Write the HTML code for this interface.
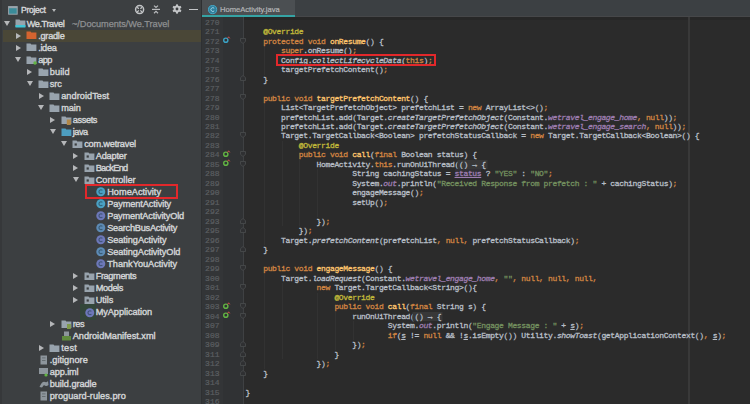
<!DOCTYPE html>
<html><head><meta charset="utf-8"><style>
*{margin:0;padding:0;box-sizing:border-box}
html,body{width:750px;height:404px;overflow:hidden;background:#2b2b2b}
#left{position:absolute;left:0;top:0;width:201px;height:404px;background:#3c3f41;overflow:hidden}
#lstrip{position:absolute;left:0;top:0;width:2.2px;height:404px;background:#36383a}
.hl{position:absolute;left:3px;top:30px;width:199px;height:12px;background:#4a4737}
.tl{position:absolute;font:9.2px/12px "Liberation Sans",sans-serif;color:#d2d4d6;white-space:pre;-webkit-text-stroke:0.4px #d2d4d6}
.path{color:#8e9092;-webkit-text-stroke:0.25px #8e9092}
.tri-d{position:absolute;width:0;height:0;border-left:3px solid transparent;border-right:3px solid transparent;border-top:5px solid #b5b7b9}
.tri-r{position:absolute;width:0;height:0;border-top:3px solid transparent;border-bottom:3px solid transparent;border-left:5px solid #b5b7b9}
.fold{position:absolute;width:8.5px;height:7px;background:#8f9aa3;border-radius:0.5px}
.fold.orange{background:#d66a35}
.fold.blue{background:#5a8db5}
.cls{position:absolute;width:9px;height:9px;border-radius:50%;background:#4aa1c4}
.cls.c2{background:#6c77b8}
.cls.c3{background:#5e8bb6}
.fil{position:absolute;width:7px;height:9px;background:#8f969c}
#phead{position:absolute;left:0;top:0;width:202px;height:18px}
#editor{position:absolute;left:202px;top:0;width:548px;height:404px;background:#2b2b2b;overflow:hidden}
#tabbar{position:absolute;left:202px;top:0;width:548px;height:17.2px;background:#3c4043;border-bottom:1.3px solid #464749}
#tab{position:absolute;left:202px;top:0;width:93px;height:15px;background:#4b4f52}
#tabline{position:absolute;left:202px;top:15px;width:93px;height:2px;background:#35a3a4}
#gutter{position:absolute;left:202px;top:17px;width:42px;height:387px;background:#303234}
.ic{position:absolute;overflow:visible}
.ln{position:absolute;left:203.5px;width:16px;text-align:right;font:8.000px/9.49px "Liberation Mono",monospace;color:#5c5f62;white-space:pre;-webkit-text-stroke:0.2px}
.cl{position:absolute;left:245.4px;font:8.000px/9.49px "Liberation Mono",monospace;letter-spacing:-0.3512px;color:#b7bec6;white-space:pre;-webkit-text-stroke:0.3px}
.k{color:#d08442} .a{color:#c0b93a} .m{color:#ffc66d} .s{color:#73905f} .f{color:#9d7db0;font-style:italic} .i{font-style:italic}
.u{text-decoration:underline} .p{color:#9d7db0;text-decoration:underline;background:#333137}
.fb{background:#383838;box-shadow:-1.5px 0 0 #383838, 1.5px 0 0 #383838}
.rbox{position:absolute;border:2px solid #e2282b}
#margin{position:absolute;left:688.2px;top:17px;width:1.6px;height:387px;background:#393939}
</style></head><body>
<div id="left">
<div id="lstrip"></div>
<div class="hl"></div><div style="position:absolute;left:80px;top:304px;width:16px;height:15.5px;background:#33463a"></div>
<div class="tri-d" style="left:3.7px;top:21.1px"></div><svg class="ic" style="left:14.6px;top:19.4px" width="11" height="9" viewBox="0 0 11 9"><path d="M0.5 0.5 H4.5 L5.3 1.6 H10.4 V8 H0.5Z" fill="#98a3ad"/><rect x="0.5" y="6" width="9.9" height="2.5" fill="#3fc5d8"/></svg><div class="tl" style="left:26.7px;top:17.6px;letter-spacing:-0.414px"><span>We.Travel</span><span class="path" style="position:absolute;left:45.3px;top:0;letter-spacing:-0.05px">~/Documents/We.Travel</span></div><div class="tri-r" style="left:15.7px;top:32.6px"></div><svg class="ic" style="left:26.1px;top:31.4px" width="11" height="9" viewBox="0 0 11 9"><path d="M0.5 0.5 H4.5 L5.3 1.6 H10.4 V8 H0.5Z" fill="#d4642f"/></svg><div class="tl" style="left:38.2px;top:29.6px;letter-spacing:-0.255px"><span>.gradle</span></div><div class="tri-r" style="left:15.7px;top:44.6px"></div><svg class="ic" style="left:26.1px;top:43.4px" width="11" height="9" viewBox="0 0 11 9"><path d="M0.5 0.5 H4.5 L5.3 1.6 H10.4 V8 H0.5Z" fill="#98a3ad"/></svg><div class="tl" style="left:38.2px;top:41.6px;letter-spacing:-0.337px"><span>.idea</span></div><div class="tri-d" style="left:15.2px;top:57.2px"></div><svg class="ic" style="left:26.1px;top:55.5px" width="11" height="9" viewBox="0 0 11 9"><path d="M0.5 0.5 H4.5 L5.3 1.6 H10.4 V8 H0.5Z" fill="#98a3ad"/><circle cx="9" cy="7" r="1.7" fill="#62b543"/></svg><div class="tl" style="left:38.2px;top:53.7px;letter-spacing:-0.625px"><span>app</span></div><div class="tri-r" style="left:27.2px;top:68.7px"></div><svg class="ic" style="left:37.6px;top:67.5px" width="11" height="9" viewBox="0 0 11 9"><path d="M0.5 0.5 H4.5 L5.3 1.6 H10.4 V8 H0.5Z" fill="#98a3ad"/></svg><div class="tl" style="left:49.7px;top:65.7px;letter-spacing:0.141px"><span>build</span></div><div class="tri-d" style="left:26.7px;top:81.2px"></div><svg class="ic" style="left:37.6px;top:79.5px" width="11" height="9" viewBox="0 0 11 9"><path d="M0.5 0.5 H4.5 L5.3 1.6 H10.4 V8 H0.5Z" fill="#98a3ad"/></svg><div class="tl" style="left:49.7px;top:77.7px;letter-spacing:-0.032px"><span>src</span></div><div class="tri-r" style="left:38.7px;top:92.7px"></div><svg class="ic" style="left:49.1px;top:91.5px" width="11" height="9" viewBox="0 0 11 9"><path d="M0.5 0.5 H4.5 L5.3 1.6 H10.4 V8 H0.5Z" fill="#98a3ad"/></svg><div class="tl" style="left:61.2px;top:89.7px;letter-spacing:0.044px"><span>androidTest</span></div><div class="tri-d" style="left:38.2px;top:105.2px"></div><svg class="ic" style="left:49.1px;top:103.5px" width="11" height="9" viewBox="0 0 11 9"><path d="M0.5 0.5 H4.5 L5.3 1.6 H10.4 V8 H0.5Z" fill="#98a3ad"/></svg><div class="tl" style="left:61.2px;top:101.7px;letter-spacing:-0.080px"><span>main</span></div><div class="tri-r" style="left:50.2px;top:116.8px"></div><svg class="ic" style="left:60.6px;top:115.6px" width="11" height="9" viewBox="0 0 11 9"><path d="M0.5 0.5 H4.5 L5.3 1.6 H10.4 V8 H0.5Z" fill="#98a3ad"/><rect x="5.8" y="3.5" width="4" height="5.5" fill="#b08748"/></svg><div class="tl" style="left:72.7px;top:113.8px;letter-spacing:-0.358px"><span>assets</span></div><div class="tri-d" style="left:49.7px;top:129.3px"></div><svg class="ic" style="left:60.6px;top:127.6px" width="11" height="9" viewBox="0 0 11 9"><path d="M0.5 0.5 H4.5 L5.3 1.6 H10.4 V8 H0.5Z" fill="#4d9ec0"/></svg><div class="tl" style="left:72.7px;top:125.8px;letter-spacing:-0.459px"><span>java</span></div><div class="tri-d" style="left:61.2px;top:141.3px"></div><svg class="ic" style="left:72.1px;top:139.6px" width="11" height="9" viewBox="0 0 11 9"><path d="M0.5 0.5 H4.5 L5.3 1.6 H10.4 V8 H0.5Z" fill="#98a3ad"/><rect x="2.6" y="3.4" width="2.2" height="2.2" fill="#3c3f41"/></svg><div class="tl" style="left:84.2px;top:137.8px;letter-spacing:-0.199px"><span>com.wetravel</span></div><div class="tri-r" style="left:73.2px;top:152.8px"></div><svg class="ic" style="left:83.6px;top:151.6px" width="11" height="9" viewBox="0 0 11 9"><path d="M0.5 0.5 H4.5 L5.3 1.6 H10.4 V8 H0.5Z" fill="#98a3ad"/><rect x="2.6" y="3.4" width="2.2" height="2.2" fill="#3c3f41"/></svg><div class="tl" style="left:95.7px;top:149.8px;letter-spacing:-0.170px"><span>Adapter</span></div><div class="tri-r" style="left:73.2px;top:164.8px"></div><svg class="ic" style="left:83.6px;top:163.6px" width="11" height="9" viewBox="0 0 11 9"><path d="M0.5 0.5 H4.5 L5.3 1.6 H10.4 V8 H0.5Z" fill="#98a3ad"/><rect x="2.6" y="3.4" width="2.2" height="2.2" fill="#3c3f41"/></svg><div class="tl" style="left:95.7px;top:161.8px;letter-spacing:-0.720px"><span>BackEnd</span></div><div class="tri-d" style="left:72.7px;top:177.4px"></div><svg class="ic" style="left:83.6px;top:175.7px" width="11" height="9" viewBox="0 0 11 9"><path d="M0.5 0.5 H4.5 L5.3 1.6 H10.4 V8 H0.5Z" fill="#98a3ad"/><rect x="2.6" y="3.4" width="2.2" height="2.2" fill="#3c3f41"/></svg><div class="tl" style="left:95.7px;top:173.9px;letter-spacing:0.013px"><span>Controller</span></div><svg class="ic" style="left:96.4px;top:187.3px" width="10" height="10" viewBox="0 0 10 10"><circle cx="4.8" cy="4.8" r="4.5" fill="#4aa1c4"/><path d="M6.4 3.4 A2 2 0 1 0 6.4 6.2" stroke="#1f3a4a" stroke-width="1.1" fill="none" opacity="0.6"/></svg><div class="tl" style="left:107.2px;top:185.9px;letter-spacing:0.020px"><span>HomeActivity</span></div><svg class="ic" style="left:96.4px;top:199.3px" width="10" height="10" viewBox="0 0 10 10"><circle cx="4.8" cy="4.8" r="4.5" fill="#4aa1c4"/><path d="M6.4 3.4 A2 2 0 1 0 6.4 6.2" stroke="#1f3a4a" stroke-width="1.1" fill="none" opacity="0.6"/></svg><div class="tl" style="left:107.2px;top:197.9px;letter-spacing:-0.096px"><span>PaymentActivity</span></div><svg class="ic" style="left:96.4px;top:211.3px" width="10" height="10" viewBox="0 0 10 10"><circle cx="4.8" cy="4.8" r="4.5" fill="#6d78b9"/><path d="M6.4 3.4 A2 2 0 1 0 6.4 6.2" stroke="#1f3a4a" stroke-width="1.1" fill="none" opacity="0.6"/></svg><div class="tl" style="left:107.2px;top:209.9px;letter-spacing:-0.156px"><span>PaymentActivityOld</span></div><svg class="ic" style="left:96.4px;top:223.3px" width="10" height="10" viewBox="0 0 10 10"><circle cx="4.8" cy="4.8" r="4.5" fill="#5d8bb5"/><path d="M6.4 3.4 A2 2 0 1 0 6.4 6.2" stroke="#1f3a4a" stroke-width="1.1" fill="none" opacity="0.6"/></svg><div class="tl" style="left:107.2px;top:221.9px;letter-spacing:-0.246px"><span>SearchBusActivity</span></div><svg class="ic" style="left:96.4px;top:235.4px" width="10" height="10" viewBox="0 0 10 10"><circle cx="4.8" cy="4.8" r="4.5" fill="#6d78b9"/><path d="M6.4 3.4 A2 2 0 1 0 6.4 6.2" stroke="#1f3a4a" stroke-width="1.1" fill="none" opacity="0.6"/></svg><div class="tl" style="left:107.2px;top:234.0px;letter-spacing:-0.067px"><span>SeatingActivity</span></div><svg class="ic" style="left:96.4px;top:247.4px" width="10" height="10" viewBox="0 0 10 10"><circle cx="4.8" cy="4.8" r="4.5" fill="#5d8bb5"/><path d="M6.4 3.4 A2 2 0 1 0 6.4 6.2" stroke="#1f3a4a" stroke-width="1.1" fill="none" opacity="0.6"/></svg><div class="tl" style="left:107.2px;top:246.0px;letter-spacing:-0.074px"><span>SeatingActivityOld</span></div><svg class="ic" style="left:96.4px;top:259.4px" width="10" height="10" viewBox="0 0 10 10"><circle cx="4.8" cy="4.8" r="4.5" fill="#6d78b9"/><path d="M6.4 3.4 A2 2 0 1 0 6.4 6.2" stroke="#1f3a4a" stroke-width="1.1" fill="none" opacity="0.6"/></svg><div class="tl" style="left:107.2px;top:258.0px;letter-spacing:-0.015px"><span>ThankYouActivity</span></div><div class="tri-r" style="left:73.2px;top:273.0px"></div><svg class="ic" style="left:83.6px;top:271.8px" width="11" height="9" viewBox="0 0 11 9"><path d="M0.5 0.5 H4.5 L5.3 1.6 H10.4 V8 H0.5Z" fill="#98a3ad"/><rect x="2.6" y="3.4" width="2.2" height="2.2" fill="#3c3f41"/></svg><div class="tl" style="left:95.7px;top:270.0px;letter-spacing:-0.371px"><span>Fragments</span></div><div class="tri-r" style="left:73.2px;top:285.0px"></div><svg class="ic" style="left:83.6px;top:283.8px" width="11" height="9" viewBox="0 0 11 9"><path d="M0.5 0.5 H4.5 L5.3 1.6 H10.4 V8 H0.5Z" fill="#98a3ad"/><rect x="2.6" y="3.4" width="2.2" height="2.2" fill="#3c3f41"/></svg><div class="tl" style="left:95.7px;top:282.0px;letter-spacing:-0.391px"><span>Models</span></div><div class="tri-r" style="left:73.2px;top:297.1px"></div><svg class="ic" style="left:83.6px;top:295.9px" width="11" height="9" viewBox="0 0 11 9"><path d="M0.5 0.5 H4.5 L5.3 1.6 H10.4 V8 H0.5Z" fill="#98a3ad"/><rect x="2.6" y="3.4" width="2.2" height="2.2" fill="#3c3f41"/></svg><div class="tl" style="left:95.7px;top:294.1px;letter-spacing:-0.022px"><span>Utils</span></div><svg class="ic" style="left:84.9px;top:307.5px" width="10" height="10" viewBox="0 0 10 10"><circle cx="4.8" cy="4.8" r="4.5" fill="#6d78b9"/><path d="M6.4 3.4 A2 2 0 1 0 6.4 6.2" stroke="#1f3a4a" stroke-width="1.1" fill="none" opacity="0.6"/></svg><div class="tl" style="left:95.7px;top:306.1px;letter-spacing:-0.064px"><span>MyApplication</span></div><div class="tri-r" style="left:50.2px;top:321.1px"></div><svg class="ic" style="left:60.6px;top:319.9px" width="11" height="9" viewBox="0 0 11 9"><path d="M0.5 0.5 H4.5 L5.3 1.6 H10.4 V8 H0.5Z" fill="#98a3ad"/><rect x="6" y="4" width="3.8" height="5" fill="#7f9a4a"/></svg><div class="tl" style="left:72.7px;top:318.1px;letter-spacing:-0.390px"><span>res</span></div><svg class="ic" style="left:62.2px;top:331.3px" width="10" height="10" viewBox="0 0 10 10"><rect x="2" y="0.5" width="5" height="5" fill="#8d959c"/><rect x="0" y="5" width="9" height="4.5" fill="#5f8a3d"/></svg><div class="tl" style="left:72.7px;top:330.1px;letter-spacing:-0.019px"><span>AndroidManifest.xml</span></div><div class="tri-r" style="left:38.7px;top:345.1px"></div><svg class="ic" style="left:49.1px;top:343.9px" width="11" height="9" viewBox="0 0 11 9"><path d="M0.5 0.5 H4.5 L5.3 1.6 H10.4 V8 H0.5Z" fill="#98a3ad"/></svg><div class="tl" style="left:61.2px;top:342.1px;letter-spacing:0.290px"><span>test</span></div><svg class="ic" style="left:39.2px;top:355.4px" width="10" height="10" viewBox="0 0 10 10"><rect x="1.5" y="0.5" width="6.5" height="9" fill="#8d959c"/><rect x="3" y="2.5" width="3.5" height="0.8" fill="#5d6468"/><rect x="3" y="5" width="3.5" height="0.8" fill="#5d6468"/></svg><div class="tl" style="left:49.7px;top:354.2px;letter-spacing:0.028px"><span>.gitignore</span></div><svg class="ic" style="left:39.2px;top:367.4px" width="10" height="10" viewBox="0 0 10 10"><rect x="0" y="1" width="9" height="6" fill="#8d959c"/><circle cx="7" cy="8" r="1.6" fill="#62b543"/></svg><div class="tl" style="left:49.7px;top:366.2px;letter-spacing:-0.110px"><span>app.iml</span></div><svg class="ic" style="left:39.2px;top:379.4px" width="10" height="10" viewBox="0 0 10 10"><path d="M0.5 8 Q3 2 6 3 Q8.5 3.5 9 2 L9.5 6 Q7 8 5 6 L3 8.5Z" fill="#8d959c"/></svg><div class="tl" style="left:49.7px;top:378.2px;letter-spacing:-0.043px"><span>build.gradle</span></div><svg class="ic" style="left:39.2px;top:391.4px" width="10" height="10" viewBox="0 0 10 10"><rect x="1.5" y="0.5" width="6.5" height="9" fill="#8d959c"/><rect x="3" y="2.5" width="3.5" height="0.8" fill="#5d6468"/><rect x="3" y="5" width="3.5" height="0.8" fill="#5d6468"/></svg><div class="tl" style="left:49.7px;top:390.2px;letter-spacing:0.030px"><span>proguard-rules.pro</span></div>
<div class="tl" style="left:21px;top:3.8px;font-size:8.6px;letter-spacing:-0.3px">Project</div>
<svg class="ic" style="left:8px;top:5.5px" width="10" height="9" viewBox="0 0 10 9"><rect x="0.6" y="0.6" width="8.6" height="7.6" fill="#3a8b99" stroke="#9aa3aa" stroke-width="1"/><rect x="0.6" y="0.6" width="8.6" height="1.6" fill="#9aa3aa"/></svg>
<div class="tri-d" style="left:51.6px;top:9px;border-left-width:2.5px;border-right-width:2.5px;border-top-width:3.5px"></div>
<svg class="ic" style="left:134px;top:3.6px" width="12" height="12" viewBox="0 0 12 12"><circle cx="5.6" cy="5.6" r="4" fill="none" stroke="#c3c5c7" stroke-width="1.5"/><path d="M3.2 3.2 L4.8 4.8 M8 3.2 L6.4 4.8 M3.2 8 L4.8 6.4 M8 8 L6.4 6.4" stroke="#c3c5c7" stroke-width="1.3"/></svg>
<svg class="ic" style="left:151px;top:4px" width="10" height="11" viewBox="0 0 10 11"><path d="M1 5.4 H9" stroke="#b9bbbd" stroke-width="1.2"/><path d="M3 1.6 L5 3.4 L7 1.6" stroke="#b9bbbd" stroke-width="1.2" fill="none"/><path d="M3 9.2 L5 7.4 L7 9.2" stroke="#b9bbbd" stroke-width="1.2" fill="none"/></svg>
<svg class="ic" style="left:172px;top:4.2px" width="10" height="10" viewBox="0 0 10 10"><g fill="#c3c5c7"><circle cx="5" cy="5" r="3.4"/><rect x="4" y="0.4" width="2" height="9.2"/><rect x="4" y="0.4" width="2" height="9.2" transform="rotate(60 5 5)"/><rect x="4" y="0.4" width="2" height="9.2" transform="rotate(120 5 5)"/></g><circle cx="5" cy="5" r="1.4" fill="#3c3f41"/></svg>
<div style="position:absolute;left:189px;top:8.8px;width:9px;height:1.4px;background:#c3c5c7"></div>
</div>
<div id="tabbar"></div><div style="position:absolute;left:200.5px;top:0;width:2px;height:404px;background:#2e3032"></div>
<div id="tab"></div>
<div id="tabline"></div>
<svg class="ic" style="left:208px;top:4.6px" width="10" height="10" viewBox="0 0 10 10"><circle cx="4.6" cy="4.6" r="4.1" fill="#2f7f9c" stroke="#46a8c8" stroke-width="1"/><path d="M6.2 3.3 A1.9 1.9 0 1 0 6.2 5.9" stroke="#9fd3e6" stroke-width="1" fill="none"/></svg>
<div class="tl" style="left:220px;top:4px;font-size:7.6px;color:#b4b6b8;-webkit-text-stroke:0.2px #b4b6b8">HomeActivity.java</div>
<div id="gutter"></div><div style="position:absolute;left:244px;top:17.2px;width:506px;height:2.4px;background:#272727"></div>
<div id="margin"></div>
<div style="position:absolute;left:202px;top:17px;width:21px;height:387px;background:#333537"></div>
<div style="position:absolute;left:242.6px;top:17px;width:1.3px;height:387px;background:#3f4143"></div>
<svg class="ic" style="left:240.3px;top:37.52px" width="6" height="6" viewBox="0 0 6 6"><path d="M0.5 0.5 H5.5 V3.4 L3 5.5 L0.5 3.4Z" fill="#2f3032" stroke="#47494b" stroke-width="0.9"/></svg><svg class="ic" style="left:240.3px;top:94.47px" width="6" height="6" viewBox="0 0 6 6"><path d="M0.5 0.5 H5.5 V3.4 L3 5.5 L0.5 3.4Z" fill="#2f3032" stroke="#47494b" stroke-width="0.9"/></svg><svg class="ic" style="left:240.3px;top:132.42px" width="6" height="6" viewBox="0 0 6 6"><path d="M0.5 0.5 H5.5 V3.4 L3 5.5 L0.5 3.4Z" fill="#2f3032" stroke="#47494b" stroke-width="0.9"/></svg><svg class="ic" style="left:240.3px;top:151.41px" width="6" height="6" viewBox="0 0 6 6"><path d="M0.5 0.5 H5.5 V3.4 L3 5.5 L0.5 3.4Z" fill="#2f3032" stroke="#47494b" stroke-width="0.9"/></svg><svg class="ic" style="left:240.3px;top:160.89px" width="6" height="6" viewBox="0 0 6 6"><path d="M0.5 0.5 H5.5 V3.4 L3 5.5 L0.5 3.4Z" fill="#2f3032" stroke="#47494b" stroke-width="0.9"/></svg><svg class="ic" style="left:240.3px;top:265.29px" width="6" height="6" viewBox="0 0 6 6"><path d="M0.5 0.5 H5.5 V3.4 L3 5.5 L0.5 3.4Z" fill="#2f3032" stroke="#47494b" stroke-width="0.9"/></svg><svg class="ic" style="left:240.3px;top:284.27px" width="6" height="6" viewBox="0 0 6 6"><path d="M0.5 0.5 H5.5 V3.4 L3 5.5 L0.5 3.4Z" fill="#2f3032" stroke="#47494b" stroke-width="0.9"/></svg><svg class="ic" style="left:240.3px;top:303.25px" width="6" height="6" viewBox="0 0 6 6"><path d="M0.5 0.5 H5.5 V3.4 L3 5.5 L0.5 3.4Z" fill="#2f3032" stroke="#47494b" stroke-width="0.9"/></svg><svg class="ic" style="left:240.3px;top:312.74px" width="6" height="6" viewBox="0 0 6 6"><path d="M0.5 0.5 H5.5 V3.4 L3 5.5 L0.5 3.4Z" fill="#2f3032" stroke="#47494b" stroke-width="0.9"/></svg><svg class="ic" style="left:240.3px;top:75.48px" width="6" height="6" viewBox="0 0 6 6"><path d="M0.5 5.5 H5.5 V2.6 L3 0.5 L0.5 2.6Z" fill="#2f3032" stroke="#47494b" stroke-width="0.9"/></svg><svg class="ic" style="left:240.3px;top:217.83px" width="6" height="6" viewBox="0 0 6 6"><path d="M0.5 5.5 H5.5 V2.6 L3 0.5 L0.5 2.6Z" fill="#2f3032" stroke="#47494b" stroke-width="0.9"/></svg><svg class="ic" style="left:240.3px;top:227.32px" width="6" height="6" viewBox="0 0 6 6"><path d="M0.5 5.5 H5.5 V2.6 L3 0.5 L0.5 2.6Z" fill="#2f3032" stroke="#47494b" stroke-width="0.9"/></svg><svg class="ic" style="left:240.3px;top:246.30px" width="6" height="6" viewBox="0 0 6 6"><path d="M0.5 5.5 H5.5 V2.6 L3 0.5 L0.5 2.6Z" fill="#2f3032" stroke="#47494b" stroke-width="0.9"/></svg><svg class="ic" style="left:240.3px;top:341.21px" width="6" height="6" viewBox="0 0 6 6"><path d="M0.5 5.5 H5.5 V2.6 L3 0.5 L0.5 2.6Z" fill="#2f3032" stroke="#47494b" stroke-width="0.9"/></svg><svg class="ic" style="left:240.3px;top:350.70px" width="6" height="6" viewBox="0 0 6 6"><path d="M0.5 5.5 H5.5 V2.6 L3 0.5 L0.5 2.6Z" fill="#2f3032" stroke="#47494b" stroke-width="0.9"/></svg><svg class="ic" style="left:240.3px;top:360.19px" width="6" height="6" viewBox="0 0 6 6"><path d="M0.5 5.5 H5.5 V2.6 L3 0.5 L0.5 2.6Z" fill="#2f3032" stroke="#47494b" stroke-width="0.9"/></svg><svg class="ic" style="left:240.3px;top:369.68px" width="6" height="6" viewBox="0 0 6 6"><path d="M0.5 5.5 H5.5 V2.6 L3 0.5 L0.5 2.6Z" fill="#2f3032" stroke="#47494b" stroke-width="0.9"/></svg><svg class="ic" style="left:222px;top:36.02px" width="9" height="8" viewBox="0 0 9 8"><circle cx="3.8" cy="4.2" r="2.1" fill="none" stroke="#3aa3c6" stroke-width="1.4"/><path d="M6.6 0.8 L7.8 2.4 M6.6 0.8 L5.6 2.4" stroke="#d9534f" stroke-width="0.9"/></svg><svg class="ic" style="left:222px;top:149.91px" width="9" height="8" viewBox="0 0 9 8"><circle cx="3.8" cy="4.2" r="2.1" fill="none" stroke="#62b543" stroke-width="1.4"/><path d="M6.6 0.8 L7.8 2.4 M6.6 0.8 L5.6 2.4" stroke="#d9534f" stroke-width="0.9"/></svg><svg class="ic" style="left:222px;top:159.39px" width="9" height="8" viewBox="0 0 9 8"><circle cx="3.8" cy="4.2" r="2.1" fill="none" stroke="#62b543" stroke-width="1.4"/><path d="M6.6 0.8 L7.8 2.4 M6.6 0.8 L5.6 2.4" stroke="#d9534f" stroke-width="0.9"/></svg><svg class="ic" style="left:222px;top:301.75px" width="9" height="8" viewBox="0 0 9 8"><circle cx="3.8" cy="4.2" r="2.1" fill="none" stroke="#62b543" stroke-width="1.4"/><path d="M6.6 0.8 L7.8 2.4 M6.6 0.8 L5.6 2.4" stroke="#d9534f" stroke-width="0.9"/></svg><svg class="ic" style="left:222px;top:311.24px" width="9" height="8" viewBox="0 0 9 8"><circle cx="3.8" cy="4.2" r="2.1" fill="none" stroke="#62b543" stroke-width="1.4"/><path d="M6.6 0.8 L7.8 2.4 M6.6 0.8 L5.6 2.4" stroke="#d9534f" stroke-width="0.9"/></svg><div style="position:absolute;left:263.80px;top:46.07px;width:1px;height:28.47px;background:#323232"></div><div style="position:absolute;left:263.80px;top:103.01px;width:1px;height:142.35px;background:#323232"></div><div style="position:absolute;left:281.60px;top:140.97px;width:1px;height:85.41px;background:#323232"></div><div style="position:absolute;left:299.40px;top:159.95px;width:1px;height:66.43px;background:#323232"></div><div style="position:absolute;left:317.20px;top:169.44px;width:1px;height:47.45px;background:#323232"></div><div style="position:absolute;left:263.80px;top:273.83px;width:1px;height:94.90px;background:#323232"></div><div style="position:absolute;left:281.60px;top:283.32px;width:1px;height:75.92px;background:#323232"></div><div style="position:absolute;left:317.20px;top:292.81px;width:1px;height:66.43px;background:#323232"></div><div style="position:absolute;left:335.00px;top:311.79px;width:1px;height:37.96px;background:#323232"></div><div style="position:absolute;left:352.80px;top:321.28px;width:1px;height:18.98px;background:#323232"></div>
<div class="ln" style="top:17.60px">270</div><div class="ln" style="top:27.09px">271</div><div class="ln" style="top:36.58px">272</div><div class="ln" style="top:46.07px">273</div><div class="ln" style="top:55.56px">274</div><div class="ln" style="top:65.05px">275</div><div class="ln" style="top:74.54px">276</div><div class="ln" style="top:84.03px">277</div><div class="ln" style="top:93.52px">278</div><div class="ln" style="top:103.01px">279</div><div class="ln" style="top:112.50px">280</div><div class="ln" style="top:121.99px">281</div><div class="ln" style="top:131.48px">282</div><div class="ln" style="top:140.97px">283</div><div class="ln" style="top:150.46px">284</div><div class="ln" style="top:159.95px">285</div><div class="ln" style="top:169.44px">288</div><div class="ln" style="top:178.93px">289</div><div class="ln" style="top:188.42px">290</div><div class="ln" style="top:197.91px">291</div><div class="ln" style="top:207.40px">292</div><div class="ln" style="top:216.89px">293</div><div class="ln" style="top:226.38px">295</div><div class="ln" style="top:235.87px">296</div><div class="ln" style="top:245.36px">297</div><div class="ln" style="top:254.85px">298</div><div class="ln" style="top:264.34px">299</div><div class="ln" style="top:273.83px">300</div><div class="ln" style="top:283.32px">301</div><div class="ln" style="top:292.81px">302</div><div class="ln" style="top:302.30px">303</div><div class="ln" style="top:311.79px">304</div><div class="ln" style="top:321.28px">307</div><div class="ln" style="top:330.77px">308</div><div class="ln" style="top:340.26px">309</div><div class="ln" style="top:349.75px">311</div><div class="ln" style="top:359.24px">312</div><div class="ln" style="top:368.73px">313</div><div class="ln" style="top:378.22px">314</div><div class="ln" style="top:387.71px">315</div><div class="ln" style="top:397.20px">316</div>
<div class="cl" style="top:17.60px"></div><div class="cl" style="top:27.09px">    <span class="a">@Override</span></div><div class="cl" style="top:36.58px">    <span class="k">protected void </span><span class="m">onResume</span><span class="d">() {</span></div><div class="cl" style="top:46.07px">        <span class="k">super</span><span class="d">.onResume()</span><span class="k">;</span></div><div class="cl" style="top:55.56px">        <span class="d">Config.</span><span class="i">collectLifecycleData</span><span class="d">(</span><span class="k">this</span><span class="d">)</span><span class="k">;</span></div><div class="cl" style="top:65.05px">        <span class="d">targetPrefetchContent()</span><span class="k">;</span></div><div class="cl" style="top:74.54px">    <span class="d">}</span></div><div class="cl" style="top:84.03px"></div><div class="cl" style="top:93.52px">    <span class="k">public void </span><span class="m">targetPrefetchContent</span><span class="d">() {</span></div><div class="cl" style="top:103.01px">        <span class="d">List&lt;TargetPrefetchObject&gt; prefetchList = </span><span class="k">new </span><span class="d">ArrayList&lt;&gt;()</span><span class="k">;</span></div><div class="cl" style="top:112.50px">        <span class="d">prefetchList.add(Target.</span><span class="i">createTargetPrefetchObject</span><span class="d">(Constant.</span><span class="f">wetravel_engage_home</span><span class="k">, null</span><span class="d">))</span><span class="k">;</span></div><div class="cl" style="top:121.99px">        <span class="d">prefetchList.add(Target.</span><span class="i">createTargetPrefetchObject</span><span class="d">(Constant.</span><span class="f">wetravel_engage_search</span><span class="k">, null</span><span class="d">))</span><span class="k">;</span></div><div class="cl" style="top:131.48px">        <span class="d">Target.TargetCallback&lt;Boolean&gt; prefetchStatusCallback = </span><span class="k">new </span><span class="d">Target.TargetCallback&lt;Boolean&gt;() {</span></div><div class="cl" style="top:140.97px">            <span class="a">@Override</span></div><div class="cl" style="top:150.46px">            <span class="k">public void </span><span class="m">call</span><span class="d">(</span><span class="k">final </span><span class="d">Boolean status) {</span></div><div class="cl" style="top:159.95px">                <span class="d">HomeActivity.</span><span class="k">this</span><span class="d">.runOnUiThread(</span><span class="fb">() → {</span></div><div class="cl" style="top:169.44px">                        <span class="d">String cachingStatus = </span><span class="p">status</span><span class="d"> ? </span><span class="s">&quot;YES&quot;</span><span class="d"> : </span><span class="s">&quot;NO&quot;</span><span class="k">;</span></div><div class="cl" style="top:178.93px">                        <span class="d">System.</span><span class="f">out</span><span class="d">.println(</span><span class="s">&quot;Received Response from prefetch : &quot;</span><span class="d"> + cachingStatus)</span><span class="k">;</span></div><div class="cl" style="top:188.42px">                        <span class="d">engageMessage()</span><span class="k">;</span></div><div class="cl" style="top:197.91px">                        <span class="d">setUp()</span><span class="k">;</span></div><div class="cl" style="top:207.40px"></div><div class="cl" style="top:216.89px">                <span class="d">})</span><span class="k">;</span></div><div class="cl" style="top:226.38px">            <span class="d">})</span><span class="k">;</span></div><div class="cl" style="top:235.87px">        <span class="d">Target.</span><span class="i">prefetchContent</span><span class="d">(prefetchList</span><span class="k">, null, </span><span class="d">prefetchStatusCallback)</span><span class="k">;</span></div><div class="cl" style="top:245.36px">    <span class="d">}</span></div><div class="cl" style="top:254.85px"></div><div class="cl" style="top:264.34px">    <span class="k">public void </span><span class="m">engageMessage</span><span class="d">() {</span></div><div class="cl" style="top:273.83px">        <span class="d">Target.</span><span class="i">loadRequest</span><span class="d">(Constant.</span><span class="f">wetravel_engage_home</span><span class="k">, </span><span class="s">&quot;&quot;</span><span class="k">, null, null, null,</span></div><div class="cl" style="top:283.32px">                <span class="k">new </span><span class="d">Target.TargetCallback&lt;String&gt;(){</span></div><div class="cl" style="top:292.81px">                    <span class="a">@Override</span></div><div class="cl" style="top:302.30px">                    <span class="k">public void </span><span class="m">call</span><span class="d">(</span><span class="k">final </span><span class="d">String s) {</span></div><div class="cl" style="top:311.79px">                        <span class="d">runOnUiThread(</span><span class="fb">() → {</span></div><div class="cl" style="top:321.28px">                                <span class="d">System.</span><span class="f">out</span><span class="d">.println(</span><span class="s">&quot;Engage Message : &quot;</span><span class="d"> + </span><span class="u">s</span><span class="d">)</span><span class="k">;</span></div><div class="cl" style="top:330.77px">                                <span class="k">if</span><span class="d">(</span><span class="u">s</span><span class="d"> != </span><span class="k">null </span><span class="d">&amp;&amp; !</span><span class="u">s</span><span class="d">.isEmpty()) Utility.</span><span class="i">showToast</span><span class="d">(getApplicationContext()</span><span class="k">, </span><span class="u">s</span><span class="d">)</span><span class="k">;</span></div><div class="cl" style="top:340.26px">                        <span class="d">})</span><span class="k">;</span></div><div class="cl" style="top:349.75px">                    <span class="d">}</span></div><div class="cl" style="top:359.24px">                <span class="d">})</span><span class="k">;</span></div><div class="cl" style="top:368.73px">    <span class="d">}</span></div><div class="cl" style="top:378.22px"></div><div class="cl" style="top:387.71px"><span class="d">}</span></div><div class="cl" style="top:397.20px"></div>
<div class="rbox" style="left:275.5px;top:53.9px;width:160.3px;height:12.4px"></div>
<div class="rbox" style="left:85px;top:183.8px;width:93px;height:15.2px"></div>
</body></html>
